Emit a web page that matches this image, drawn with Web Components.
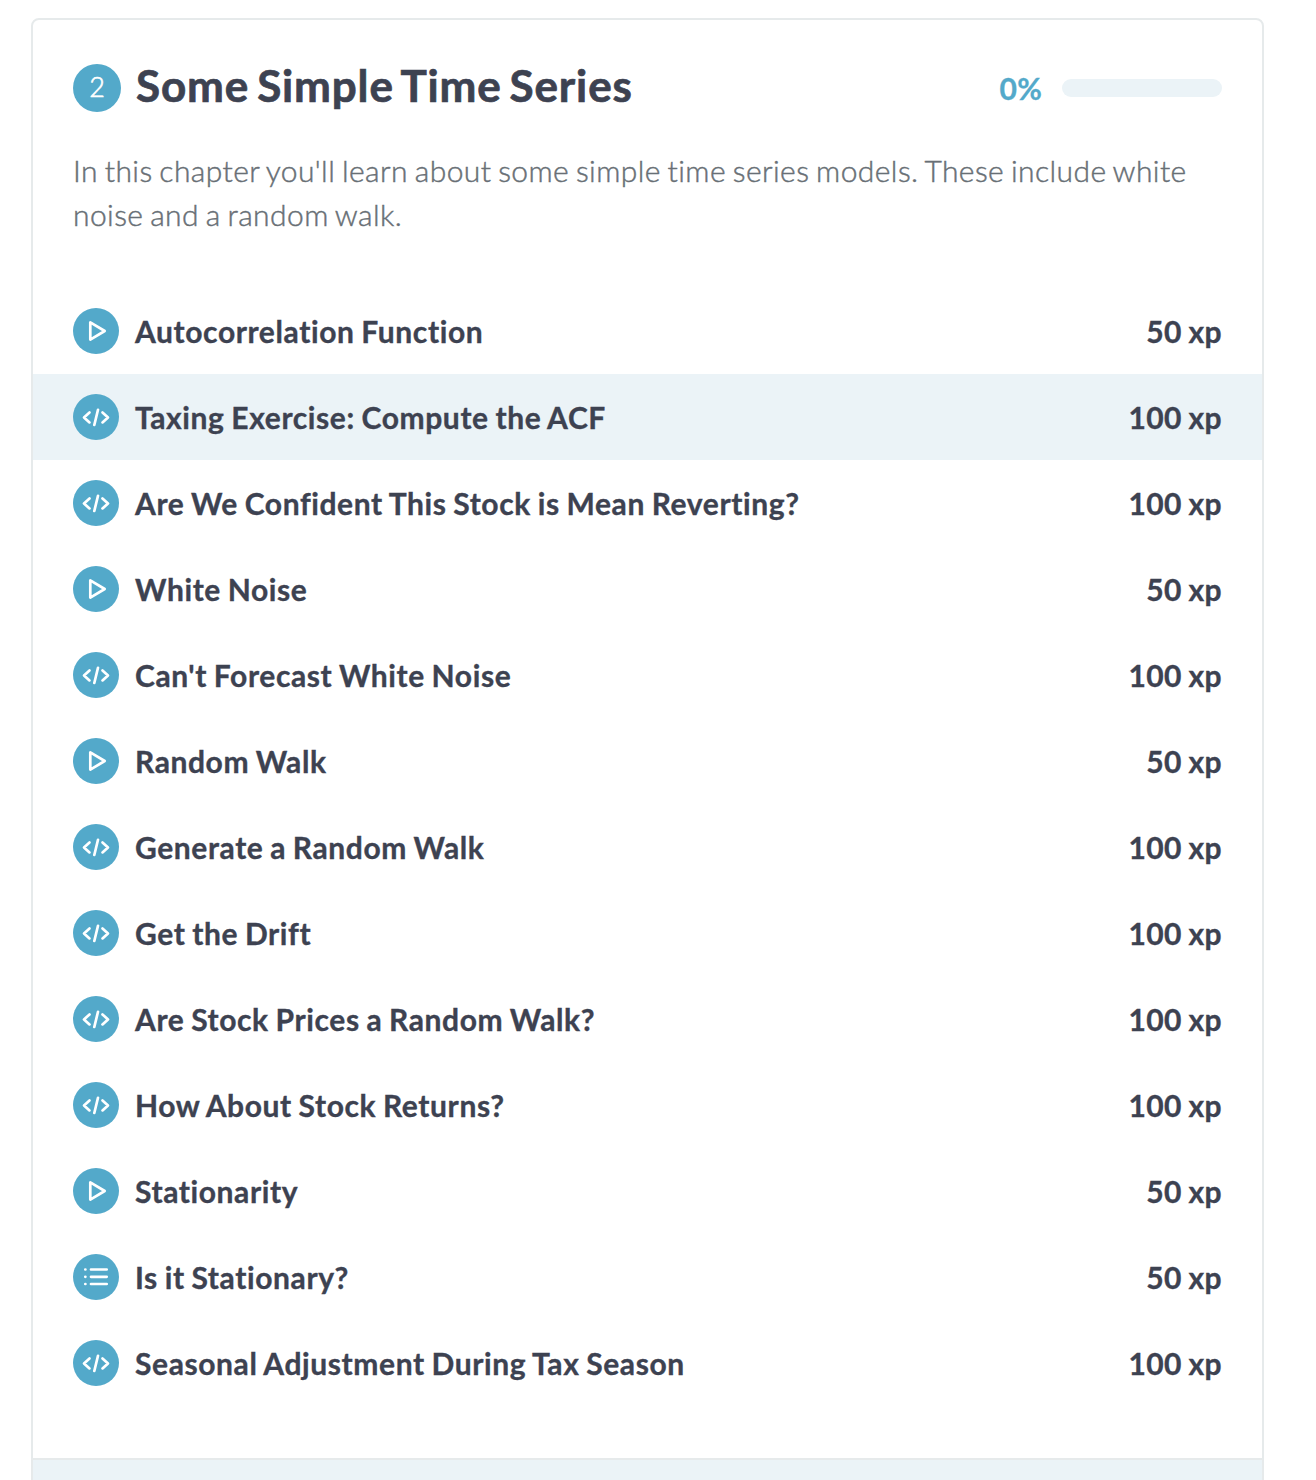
<!DOCTYPE html>
<html lang="en"><head><meta charset="utf-8"><title>Some Simple Time Series</title>
<style>html,body{margin:0;background:#fff;height:1480px;overflow:hidden}body{font-family:Lato,sans-serif;color:#3d4251}</style></head>
<body>
<chapter-card number="2" progress="0">
<span slot="title">Some Simple Time Series</span>
<span slot="description">In this chapter you'll learn about some simple time series models. These include white noise and a random walk.</span>
<exercise-row kind="video" xp="50">Autocorrelation Function</exercise-row>
<exercise-row kind="code" xp="100" active>Taxing Exercise: Compute the ACF</exercise-row>
<exercise-row kind="code" xp="100">Are We Confident This Stock is Mean Reverting?</exercise-row>
<exercise-row kind="video" xp="50">White Noise</exercise-row>
<exercise-row kind="code" xp="100">Can't Forecast White Noise</exercise-row>
<exercise-row kind="video" xp="50">Random Walk</exercise-row>
<exercise-row kind="code" xp="100">Generate a Random Walk</exercise-row>
<exercise-row kind="code" xp="100">Get the Drift</exercise-row>
<exercise-row kind="code" xp="100">Are Stock Prices a Random Walk?</exercise-row>
<exercise-row kind="code" xp="100">How About Stock Returns?</exercise-row>
<exercise-row kind="video" xp="50">Stationarity</exercise-row>
<exercise-row kind="list" xp="50">Is it Stationary?</exercise-row>
<exercise-row kind="code" xp="100">Seasonal Adjustment During Tax Season</exercise-row>
</chapter-card>
<script>
const ICONS={
video:'<path d="M17.3 14.4v17.2L31.7 23z"/>',
code:'<path d="M16.5 18.4l-5.5 5 5.5 5M29.5 18.4l5.5 5-5.5 5M25 15.8l-3.7 15.2"/>',
list:'<path d="M18 15.5h15.7M18 22.8h15.7M18 30h15.7M12.3 15.5h.1M12.3 22.8h.1M12.3 30h.1"/>'};
class ExerciseRow extends HTMLElement{
connectedCallback(){
const r=this.attachShadow({mode:'open'});
r.innerHTML=`<style>
:host{display:flex;align-items:center;height:86px;padding:0 40px;box-sizing:border-box;font-weight:700;font-size:30px;line-height:40px;letter-spacing:.6px;word-spacing:-1.1px;-webkit-text-stroke:.35px currentColor}
:host([active]){background:#ebf3f7}
svg{flex:none;width:46px;height:46px;margin-right:16px;fill:none;stroke:#fff;stroke-width:2.7;stroke-linecap:round;stroke-linejoin:round}
.name{flex:1;white-space:nowrap}.xp{white-space:nowrap;letter-spacing:.4px}
</style><svg viewBox="0 0 46 46"><circle cx="23" cy="23" r="23" fill="#53a9ca" stroke="none"/>${ICONS[this.getAttribute('kind')]}</svg><span class="name"><slot></slot></span><span class="xp">${this.getAttribute('xp')} xp</span>`;
}}
class ProgressMeter extends HTMLElement{
connectedCallback(){
const v=this.getAttribute('value');
this.attachShadow({mode:'open'}).innerHTML=`<style>
:host{display:flex;align-items:center;gap:20px;color:#53a9ca;font-weight:700;font-size:30px;line-height:40px;-webkit-text-stroke:.3px currentColor}
.bar{width:160px;height:18px;border-radius:9px;background:#ebf3f7;overflow:hidden}.fill{height:100%;width:${v}%;background:#53a9ca}
.val{letter-spacing:.2px}
</style><span class="val">${v}%</span><div class="bar"><div class="fill"></div></div>`;
}}
class ChapterCard extends HTMLElement{
connectedCallback(){
this.attachShadow({mode:'open'}).innerHTML=`<style>
:host{display:block;padding:18px 52px 0 31px}
.card{border:2px solid #e6eaeb;border-radius:8px;height:1500px;box-sizing:border-box;display:flex;flex-direction:column;overflow:hidden}
header{display:flex;align-items:center;padding:44px 40px 0;height:48px}
.num{width:48px;height:48px;border-radius:50%;background:#53a9ca;color:#fff;display:flex;align-items:center;justify-content:center;font-size:27px;line-height:46px;font-weight:300;-webkit-text-stroke:.6px currentColor;margin-right:15px;padding-bottom:2px;box-sizing:border-box}
h2{margin:0 0 6px;flex:1;font-size:44px;line-height:48px;font-weight:700;letter-spacing:.85px;word-spacing:-3.5px;-webkit-text-stroke:.7px currentColor;white-space:nowrap}
p{margin:36px 40px 0;height:88px;font-size:30px;line-height:44px;font-weight:300;letter-spacing:.42px;word-spacing:-1.8px;-webkit-text-stroke:.45px currentColor;color:#686f75}
.list{padding-top:52px}
footer{margin-top:52px;border-top:2px solid #e6eaeb;flex:1;background:#ebf3f7}
</style><section class="card"><header><span class="num">${this.getAttribute('number')}</span><h2><slot name="title"></slot></h2><progress-meter value="${this.getAttribute('progress')}"></progress-meter></header><p><slot name="description"></slot></p><div class="list"><slot></slot></div><footer></footer></section>`;
}}
customElements.define('exercise-row',ExerciseRow);
customElements.define('progress-meter',ProgressMeter);
customElements.define('chapter-card',ChapterCard);
</script></body></html>
